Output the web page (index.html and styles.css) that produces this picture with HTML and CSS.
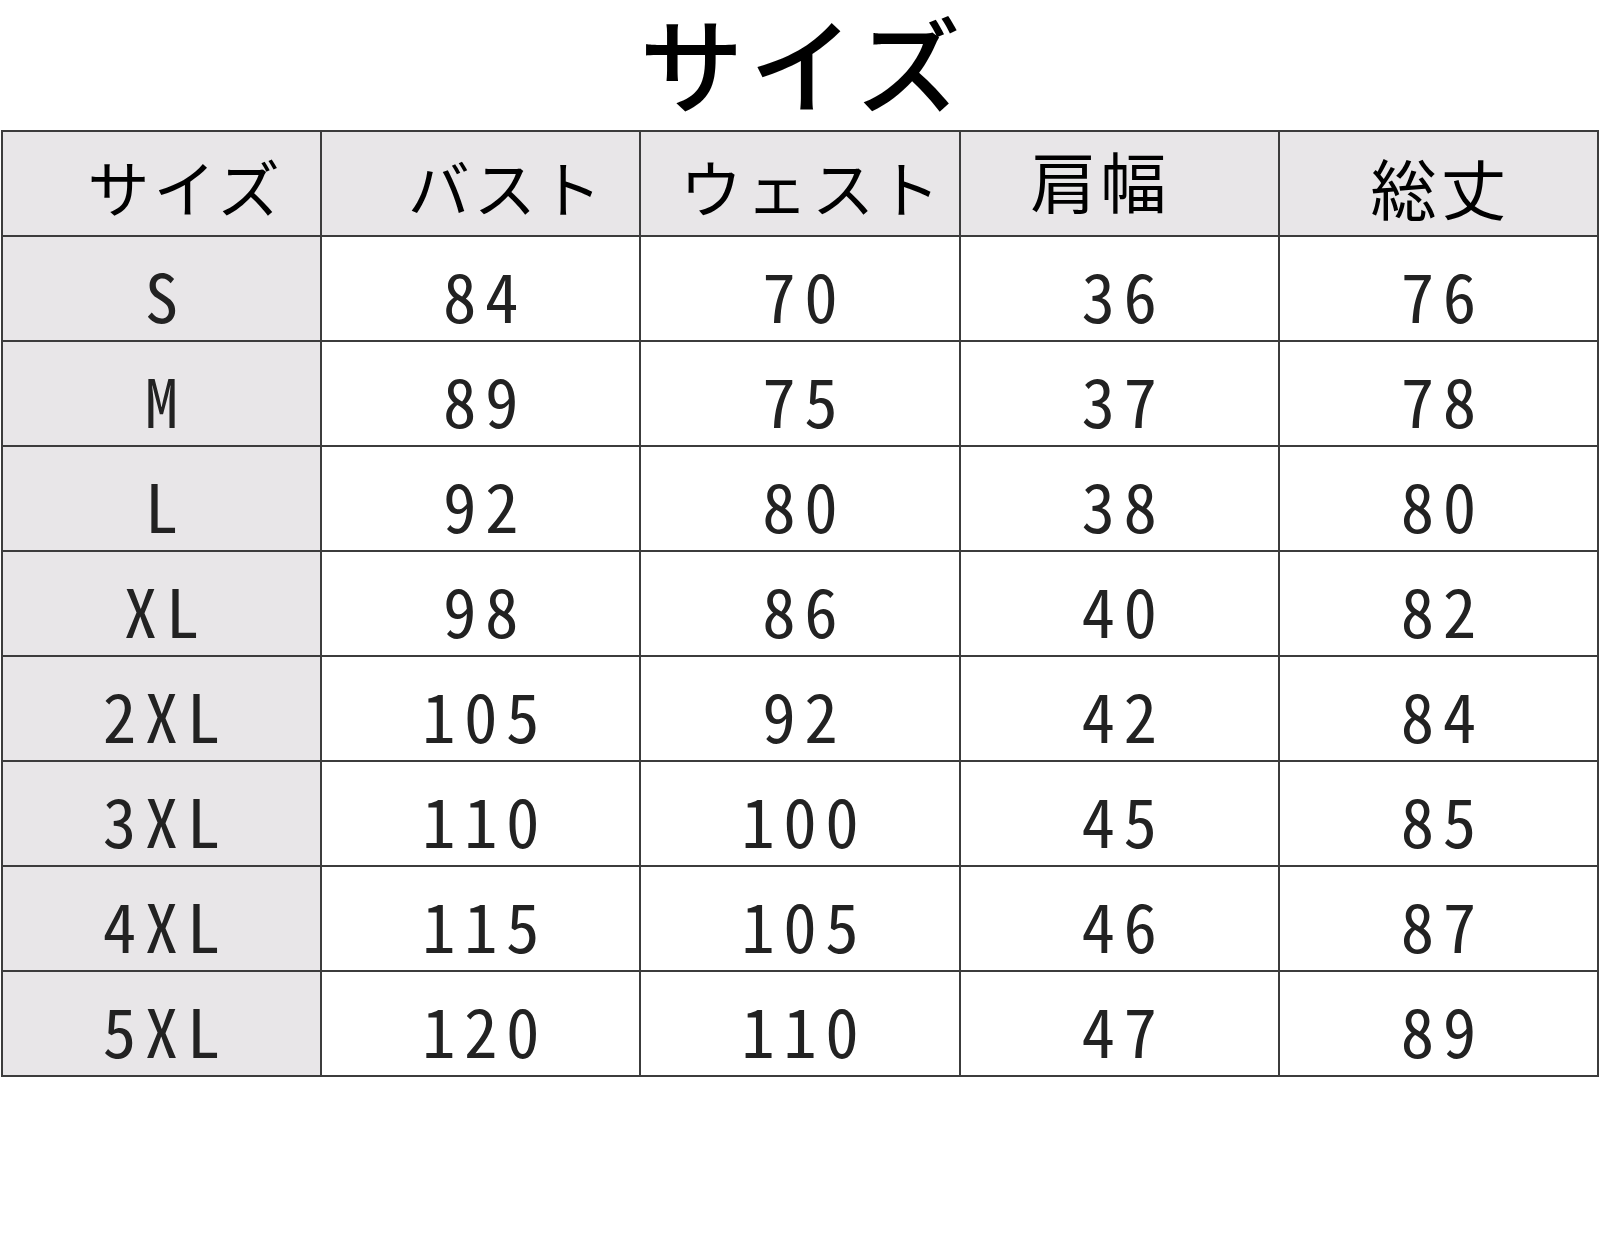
FILE: index.html
```html
<!DOCTYPE html>
<html lang="ja">
<head>
<meta charset="utf-8">
<title>サイズ</title>
<link rel="stylesheet" href="styles.css">
</head>
<body>
<h1 class="title">サイズ</h1>
<div class="chart">
  <div class="cell head h-size">サイズ</div>
  <div class="cell head h-bust">バスト</div>
  <div class="cell head h-waist">ウェスト</div>
  <div class="cell head h-shoulder">肩幅</div>
  <div class="cell head h-length">総丈</div>

  <div class="cell size">S</div><div class="cell num">84</div><div class="cell num">70</div><div class="cell num">36</div><div class="cell num">76</div>
  <div class="cell size">M</div><div class="cell num">89</div><div class="cell num">75</div><div class="cell num">37</div><div class="cell num">78</div>
  <div class="cell size">L</div><div class="cell num">92</div><div class="cell num">80</div><div class="cell num">38</div><div class="cell num">80</div>
  <div class="cell size">XL</div><div class="cell num">98</div><div class="cell num">86</div><div class="cell num">40</div><div class="cell num">82</div>
  <div class="cell size">2XL</div><div class="cell num">105</div><div class="cell num">92</div><div class="cell num">42</div><div class="cell num">84</div>
  <div class="cell size">3XL</div><div class="cell num">110</div><div class="cell num">100</div><div class="cell num">45</div><div class="cell num">85</div>
  <div class="cell size">4XL</div><div class="cell num">115</div><div class="cell num">105</div><div class="cell num">46</div><div class="cell num">87</div>
  <div class="cell size">5XL</div><div class="cell num">120</div><div class="cell num">110</div><div class="cell num">47</div><div class="cell num">89</div>
</div>
</body>
</html>
```
FILE: styles.css
```css
html, body {
  margin: 0;
  padding: 0;
  background: #ffffff;
}
body {
  width: 1600px;
  height: 1233px;
  overflow: hidden;
  font-family: "Noto Sans CJK JP", "Noto Sans", sans-serif;
  color: #1a1a1a;
}
.title {
  margin: 0 0 8px 0;
  padding: 0 0 0 6px;
  font-size: 104px;
  line-height: 122px;
  font-weight: 500;
  letter-spacing: 6px;
  text-align: center;
  color: #000;
}
.chart {
  margin-left: 1px;
  width: 1594px;
  padding: 2px;
  display: grid;
  grid-template-columns: repeat(5, 1fr);
  grid-auto-rows: 103px;
  gap: 2px;
  background: #3c3c3c;
}
.cell {
  background: #ffffff;
  display: flex;
  align-items: center;
  justify-content: center;
  box-sizing: border-box;
}
.head {
  background: #e8e6e8;
  font-family: "Noto Sans CJK JP", sans-serif;
  font-size: 62px;
  font-weight: 400;
  letter-spacing: 4px;
  color: #000;
  padding-top: 4px;
}
.h-size { padding-left: 48px; }
.h-bust { padding-left: 52px; }
.h-waist { padding-left: 24px; }
.h-shoulder { padding-right: 38px; padding-top: 0; padding-bottom: 10px; font-size: 66px; }
.h-length { padding-left: 4px; font-size: 66px; }
.size {
  background: #e8e6e8;
}
.size, .num {
  font-family: "Noto Sans Mono CJK JP", "Noto Sans CJK JP", monospace;
  font-feature-settings: "hwid" 1;
  font-size: 67px;
  letter-spacing: 8.5px;
  padding-left: 8.5px;
  color: #222;
  padding-top: 10px;
}
```
